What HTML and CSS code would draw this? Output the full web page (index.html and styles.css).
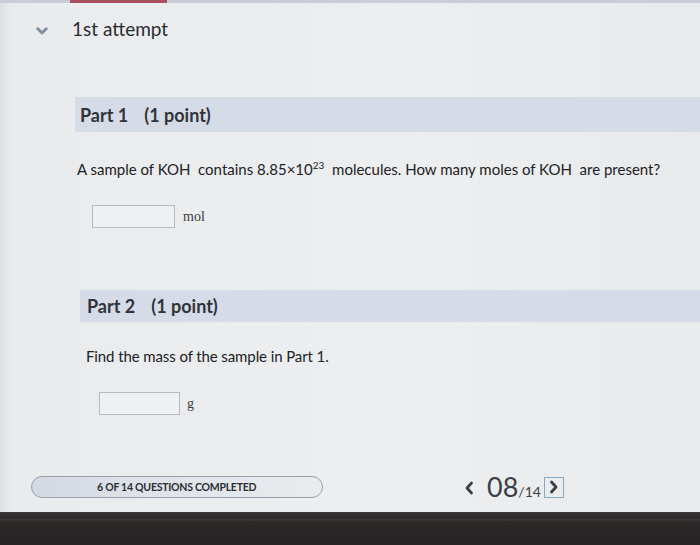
FILE: index.html
```html
<!DOCTYPE html>
<html>
<head>
<meta charset="utf-8">
<link rel="stylesheet" href="styles.css">
</head>
<body>
<div class="screen">
  <div class="topbar"><span class="tab-active"></span></div>
  <header class="attempt">
    <svg class="chevron" width="12" height="8" viewBox="0 0 12 8"><path d="M1.8 1.8 L6 6 L10.2 1.8" fill="none" stroke="#858ea3" stroke-width="3" stroke-linecap="round" stroke-linejoin="round"/></svg>
    <span class="attempt-title">1st attempt</span>
  </header>

  <section class="part part-1">
    <div class="part-band"><span class="part-name">Part 1</span><span class="part-points">(1 point)</span></div>
    <p class="question">A sample of KOH&nbsp; contains 8.85×10<sup>23</sup>&nbsp; molecules. How many moles of KOH&nbsp; are present?</p>
    <div class="answer"><span class="answer-box"></span><span class="unit">mol</span></div>
  </section>

  <section class="part part-2">
    <div class="part-band"><span class="part-name">Part 2</span><span class="part-points">(1 point)</span></div>
    <p class="question">Find the mass of the sample in Part 1.</p>
    <div class="answer"><span class="answer-box"></span><span class="unit">g</span></div>
  </section>

  <footer class="status">
    <div class="progress"><span class="progress-text">6 OF 14 QUESTIONS COMPLETED</span></div>
    <div class="pager">
      <svg class="prev" width="10" height="14" viewBox="0 0 10 14"><path d="M7.5 2 L3 7 L7.5 12" fill="none" stroke="#3a3f48" stroke-width="2.8" stroke-linecap="round" stroke-linejoin="round"/></svg>
      <span class="page-num">08</span><span class="page-total">/14</span>
      <span class="next"><svg width="10" height="14" viewBox="0 0 10 14"><path d="M2.5 2 L7 7 L2.5 12" fill="none" stroke="#3a3f48" stroke-width="2.8" stroke-linecap="round" stroke-linejoin="round"/></svg></span>
    </div>
  </footer>
  <div class="bezel"></div>
</div>
</body>
</html>
```

FILE: styles.css
```css
html, body {
  margin: 0;
  padding: 0;
}
body {
  background: #e9ebed;
  font-family: Lato, "Open Sans", sans-serif;
  color: #2b2d31;
}
.screen {
  width: 700px;
  height: 545px;
  overflow: hidden;
  background: linear-gradient(90deg, #dfe1e4 0, #e9ebed 12px, #eceef0 60%, #e8eaec 100%);
}
.topbar {
  height: 3px;
  background: #c7ccd8;
  display: flex;
}
.tab-active {
  margin-left: 70px;
  width: 97px;
  background: #a9505c;
}
.attempt {
  margin-top: 14px;
  height: 24px;
  display: flex;
  align-items: center;
  padding-left: 36px;
}
.chevron {
  margin-top: 3px;
}
.attempt-title {
  margin-left: 24px;
  font-size: 19px;
  line-height: 24px;
  color: #2a2c31;
}
.part-band {
  background: #d6dce7;
  display: flex;
  align-items: center;
  font-weight: 700;
  font-size: 18px;
  color: #30333a;
}
.part-points {
  margin-left: 16px;
}
.part-1 {
  margin-top: 56px;
}
.part-1 .part-band {
  margin-left: 75px;
  height: 35px;
  padding-left: 5px;
}
.question {
  margin: 0;
  font-size: 15px;
  line-height: 20px;
  color: #202227;
}
.question sup {
  font-size: 10px;
  line-height: 0;
  vertical-align: 6px;
}
.part-1 .question {
  margin-top: 27px;
  padding-left: 77px;
}
.answer {
  display: flex;
  align-items: center;
  margin-top: 26px;
  height: 23px;
}
.answer-box {
  box-sizing: border-box;
  height: 23px;
  border: 1px solid #b6bbc3;
  background: #eef0f2;
}
.unit {
  font-family: "Liberation Serif", serif;
  font-size: 14px;
  color: #3a3c40;
  margin-left: 8px;
}
.part-1 .answer-box {
  margin-left: 92px;
  width: 83px;
}
.part-2 {
  margin-top: 62px;
}
.part-2 .part-band {
  margin-left: 80px;
  height: 32px;
  padding-left: 7px;
}
.part-2 .question {
  margin-top: 24px;
  padding-left: 86px;
  letter-spacing: -0.1px;
}
.part-2 .answer-box {
  margin-left: 99px;
  width: 81px;
}
.part-2 .unit {
  margin-left: 7px;
}
.status {
  margin-top: 61px;
  height: 22px;
  display: flex;
  align-items: center;
}
.progress {
  box-sizing: border-box;
  margin-left: 31px;
  width: 292px;
  height: 22px;
  border: 1.5px solid #9aa0aa;
  border-radius: 11px;
  background: linear-gradient(90deg, #d3d8e2 0, #dfe3e9 40%, #e9ebee 100%);
  display: flex;
  align-items: center;
  padding-left: 65px;
}
.progress-text {
  font-size: 10.5px;
  font-weight: 700;
  letter-spacing: -0.25px;
  color: #2c2e33;
}
.pager {
  margin-left: 141px;
  display: flex;
  align-items: center;
  color: #3a3f48;
}
.prev {
  margin-top: 1px;
}
.page-num {
  margin-left: 13px;
  font-size: 27px;
  line-height: 24px;
}
.page-total {
  font-size: 14px;
  margin-top: 9px;
}
.next {
  margin-left: 3px;
  box-sizing: border-box;
  width: 20px;
  height: 21px;
  border: 1px solid #86aac6;
  display: flex;
  align-items: center;
  justify-content: center;
}
.bezel {
  margin-top: 14px;
  height: 33px;
  background: linear-gradient(180deg, #3a3637 0, #2c2929 6px, #3b3838 8px, #2a2727 10px, #262424 100%);
}
```
